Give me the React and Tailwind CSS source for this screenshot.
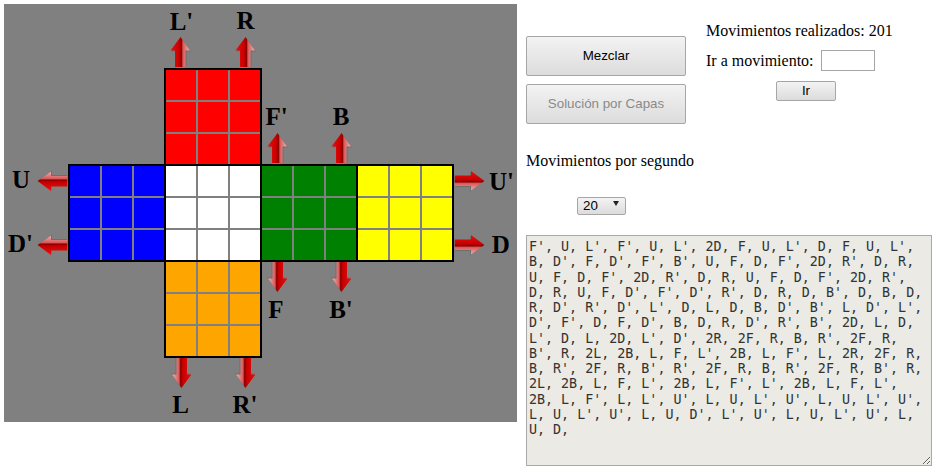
import React from 'react';

const MOVES = [
  "F', U, L', F', U, L', 2D, F, U, L', D, F, U, L',",
  "B, D', F, D', F', B', U, F, D, F', 2D, R', D, R,",
  "U, F, D, F', 2D, R', D, R, U, F, D, F', 2D, R',",
  "D, R, U, F, D', F', D', R', D, R, D, B', D, B, D,",
  "R, D', R', D', L', D, L, D, B, D', B', L, D', L',",
  "D', F', D, F, D', B, D, R, D', R', B', 2D, L, D,",
  "L', D, L, 2D, L', D', 2R, 2F, R, B, R', 2F, R,",
  "B', R, 2L, 2B, L, F, L', 2B, L, F', L, 2R, 2F, R,",
  "B, R', 2F, R, B', R', 2F, R, B, R', 2F, R, B', R,",
  "2L, 2B, L, F, L', 2B, L, F', L', 2B, L, F, L',",
  "2B, L, F', L, L', U', L, U, L', U', L, U, L', U',",
  "L, U, L', U', L, U, D', L', U', L, U, L', U', L,",
  "U, D,",
].join('\n');

const FACE_COLORS = {
  red: 'bg-[#ff0000]',
  blue: 'bg-[#0000ff]',
  white: 'bg-white',
  green: 'bg-[#008000]',
  yellow: 'bg-[#ffff00]',
  orange: 'bg-[#ffa500]',
};

function Face({ color, className = '' }) {
  return (
    <div className={`w-[98px] h-[98px] border-2 border-black bg-[#808080] grid grid-cols-3 gap-[2px] ${className}`}>
      {Array.from({ length: 9 }).map((_, i) => (
        <div key={i} className={FACE_COLORS[color]} />
      ))}
    </div>
  );
}

// one arrow drawing, turned for each direction
function Arrow({ cx, cy, dir }) {
  const rot = { up: '', down: 'rotate-180', left: '-rotate-90', right: 'rotate-90' }[dir];
  return (
    <svg
      width="21"
      height="30"
      viewBox="0 0 21 30"
      className={`absolute ${rot}`}
      style={{ left: cx - 10.5, top: cy - 15 }}
    >
      <defs>
        <linearGradient id={`ag-${dir}-${cx}-${cy}`} x1="0" y1="0" x2="1" y2="0">
          <stop offset="0" stopColor="#e81010" />
          <stop offset="0.45" stopColor="#c80000" />
          <stop offset="0.56" stopColor="#8c0000" />
          <stop offset="0.64" stopColor="#d85a5a" />
          <stop offset="1" stopColor="#f2b0b0" />
        </linearGradient>
      </defs>
      <polygon points="11.5,1 21,14.5 16.5,14.5 16.5,30 6,30 6,14.5 1.5,14.5" fill="#6e6e6e" />
      <polygon points="10.5,0 20,13.5 15.5,13.5 15.5,30 5,30 5,13.5 0.5,13.5" fill={`url(#ag-${dir}-${cx}-${cy})`} />
    </svg>
  );
}

function Label({ children, x, y, center }) {
  return (
    <span
      className={`absolute font-['Liberation_Serif',serif] font-bold text-[25px] leading-[25px] text-black whitespace-nowrap ${center ? '-translate-x-1/2' : ''}`}
      style={{ left: x, top: y }}
    >
      {children}
    </span>
  );
}

function CubeNet() {
  return (
    <div className="relative w-[513px] h-[418px] bg-[#808080] shrink-0">
      <div className="absolute left-[64px] top-[64px] flex flex-col">
        <Face color="red" className="ml-[96px]" />
        <div className="flex -mt-[2px]">
          <Face color="blue" />
          <Face color="white" className="-ml-[2px]" />
          <Face color="green" className="-ml-[2px]" />
          <Face color="yellow" className="-ml-[2px]" />
        </div>
        <Face color="orange" className="ml-[96px] -mt-[2px]" />
      </div>

      <Arrow cx={176.5} cy={48} dir="up" />
      <Arrow cx={241.5} cy={48} dir="up" />
      <Arrow cx={273} cy={144} dir="up" />
      <Arrow cx={337} cy={144} dir="up" />
      <Arrow cx={273} cy={273} dir="down" />
      <Arrow cx={337} cy={273} dir="down" />
      <Arrow cx={177} cy={369} dir="down" />
      <Arrow cx={241.5} cy={369} dir="down" />
      <Arrow cx={48.5} cy={177} dir="left" />
      <Arrow cx={48.5} cy={241} dir="left" />
      <Arrow cx={465} cy={177} dir="right" />
      <Arrow cx={465} cy={241} dir="right" />

      <Label x={177.5} y={4.5} center>L'</Label>
      <Label x={241.5} y={4} center>R</Label>
      <Label x={272.7} y={100} center>F'</Label>
      <Label x={337} y={100} center>B</Label>
      <Label x={485} y={165}>U'</Label>
      <Label x={487.7} y={228}>D</Label>
      <Label x={8} y={163}>U</Label>
      <Label x={4} y={227}>D'</Label>
      <Label x={272} y={293} center>F</Label>
      <Label x={337} y={293} center>B'</Label>
      <Label x={176.5} y={388} center>L</Label>
      <Label x={241} y={388} center>R'</Label>
    </div>
  );
}

const btn =
  "flex items-center justify-center border border-[#a6a6a6] rounded-[2px] bg-gradient-to-b from-[#f3f3f3] to-[#dcdcdc] font-['Liberation_Sans',sans-serif] text-[13.33px]";

export default function App() {
  return (
    <div className="flex items-start pl-[4px] pt-[4px] bg-white min-h-[475px] font-['Liberation_Serif',serif] text-[16px] leading-[18px] text-black">
      <CubeNet />

      <div className="ml-[9px] -mt-[4px] flex flex-col">
        <div className="flex">
          <div className="flex flex-col mt-[36px]">
            <button className={`${btn} w-[160px] h-[40px] text-black`}>Mezclar</button>
            <button className={`${btn} w-[160px] h-[40px] mt-[8px] text-[#8a8a8a]`} disabled>
              Solución por Capas
            </button>
          </div>
          <div className="flex flex-col ml-[20px] mt-[22px]">
            <div>Movimientos realizados: 201</div>
            <div className="flex items-center mt-[10px] h-[21px]">
              <span>Ir a movimiento:</span>
              <input className="ml-[7px] w-[54px] h-[21px] border border-[#a6a6a6] bg-white" />
            </div>
            <button className={`${btn} w-[60px] h-[20px] ml-[70px] mt-[10px] text-black`}>Ir</button>
          </div>
        </div>

        <div className="mt-[28px]">Movimientos por segundo</div>

        <div className="relative mt-[26px] ml-[51px] w-[49px] h-[18px]">
          <select className="appearance-none w-[49px] h-[18px] pl-[5px] border border-[#a6a6a6] rounded-[2px] bg-gradient-to-b from-[#f3f3f3] to-[#dcdcdc] font-['Liberation_Sans',sans-serif] text-[13.33px] leading-[16px] text-black">
            <option>20</option>
          </select>
          <span className="absolute left-[36px] top-[5px] w-0 h-0 border-l-[3.5px] border-r-[3.5px] border-t-[5px] border-l-transparent border-r-transparent border-t-[#222] pointer-events-none" />
        </div>

        <textarea
          className="mt-[21px] w-[406px] h-[231px] border border-[#a9a9a9] bg-[#ebeae4] px-[2px] pt-[3px] font-['DejaVu_Sans_Mono',monospace] text-[13.33px] leading-[15.25px] text-[#333] outline-none"
          readOnly
          value={MOVES}
        />
      </div>
    </div>
  );
}
